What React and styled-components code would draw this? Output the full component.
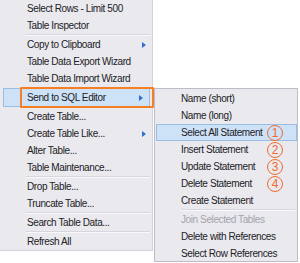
import React from 'react';
import styled, { createGlobalStyle, css } from 'styled-components';

// context menu for a table node, with the "Send to SQL Editor" submenu open

const Global = createGlobalStyle`
  html, body { margin: 0; padding: 0; background: #ffffff; }
  body { font-family: "Liberation Sans", Arial, sans-serif; }
`;

const Screen = styled.div`
  position: relative;
  width: 300px;
  height: 263px;
  overflow: hidden;
  background: #ffffff;
`;

const Menu = styled.ul`
  box-sizing: border-box;
  width: 153px;
  margin: 0;
  padding: 0;
  list-style: none;
  background: #e9e9ee;
  border-right: 1px solid #d3d3db;
  border-bottom: 1px solid #d3d3db;
`;

const SubMenu = styled.ul`
  position: absolute;
  left: 154px;
  top: 88px;
  box-sizing: border-box;
  width: 144px;
  height: 174px;
  margin: 0;
  padding: 1px 0 0;
  list-style: none;
  background: #e9e9ee;
  border: 1px solid #bdbdca;
`;

const Item = styled.li`
  position: relative;
  box-sizing: border-box;
  display: flex;
  align-items: center;
  height: 17px;
  padding: 0 6px 0 ${p => p.$indent || 27}px;
  font-size: 10px;
  letter-spacing: -0.4px;
  white-space: nowrap;
  color: ${p => (p.$disabled ? '#a4a4ad' : '#222226')};

  ${p => p.$active && css`
    margin: 0 ${p.$edge ? 0 : 2}px 0 ${p.$edge || 3}px;
    padding-left: ${(p.$indent || 27) - (p.$edge || 3) - 1}px;
    background: #cde1f7;
    border: 1px solid #9bbde3;
  `}

  ${p => p.$marked && css`
    height: 19px;
    margin-top: 1px;
    margin-bottom: 1px;
    &::after {
      content: '';
      position: absolute;
      left: 16px;
      right: -5px;
      top: -2px;
      bottom: -2px;
      border: 2px solid #f57f22;
      border-radius: 1px;
      z-index: 5;
    }
  `}
`;

const Separator = styled.li`
  height: 0;
  margin: 0 2px 0 ${p => p.$indent || 26}px;
  border-top: 1px solid #d6d6de;
  border-bottom: 1px solid #f9f9fb;
`;

const Arrow = styled.span`
  margin-left: auto;
  width: 0;
  height: 0;
  border-left: 4px solid #2f6fd2;
  border-top: 3px solid transparent;
  border-bottom: 3px solid transparent;
`;

const Badge = styled.span`
  box-sizing: border-box;
  display: flex;
  align-items: center;
  justify-content: center;
  width: 16px;
  height: 16px;
  margin-left: auto;
  margin-right: ${p => (p.$inset ? 7 : 8)}px;
  border: 1.2px solid #f26b2b;
  border-radius: 50%;
  color: #f26b2b;
  font-family: "Liberation Sans", sans-serif;
  font-size: 12px;
  letter-spacing: 0;
  line-height: 1;
`;

const mainItems = [
  { label: 'Select Rows - Limit 500' },
  { label: 'Table Inspector' },
  { sep: true },
  { label: 'Copy to Clipboard', sub: true },
  { label: 'Table Data Export Wizard' },
  { label: 'Table Data Import Wizard' },
  { label: 'Send to SQL Editor', sub: true, active: true, marked: true },
  { label: 'Create Table...' },
  { label: 'Create Table Like...', sub: true },
  { label: 'Alter Table...' },
  { label: 'Table Maintenance...' },
  { sep: true },
  { label: 'Drop Table...' },
  { label: 'Truncate Table...' },
  { sep: true },
  { label: 'Search Table Data...' },
  { sep: true },
  { label: 'Refresh All' },
];

const subItems = [
  { label: 'Name (short)' },
  { label: 'Name (long)' },
  { label: 'Select All Statement', active: true, badge: '1' },
  { label: 'Insert Statement', badge: '2' },
  { label: 'Update Statement', badge: '3' },
  { label: 'Delete Statement', badge: '4' },
  { label: 'Create Statement' },
  { sep: true },
  { label: 'Join Selected Tables', disabled: true },
  { label: 'Delete with References' },
  { label: 'Select Row References' },
];

export default function App() {
  return (
    <Screen>
      <Global />
      <Menu>
        {mainItems.map((it, i) =>
          it.sep ? (
            <Separator key={i} />
          ) : (
            <Item key={i} $active={it.active} $marked={it.marked}>
              {it.label}
              {it.sub && <Arrow />}
            </Item>
          )
        )}
      </Menu>
      <SubMenu>
        {subItems.map((it, i) =>
          it.sep ? (
            <Separator key={i} $indent={26} />
          ) : (
            <Item key={i} $indent={26} $edge={1} $active={it.active} $disabled={it.disabled}>
              {it.label}
              {it.badge && <Badge $inset={it.active}>{it.badge}</Badge>}
            </Item>
          )
        )}
      </SubMenu>
    </Screen>
  );
}
